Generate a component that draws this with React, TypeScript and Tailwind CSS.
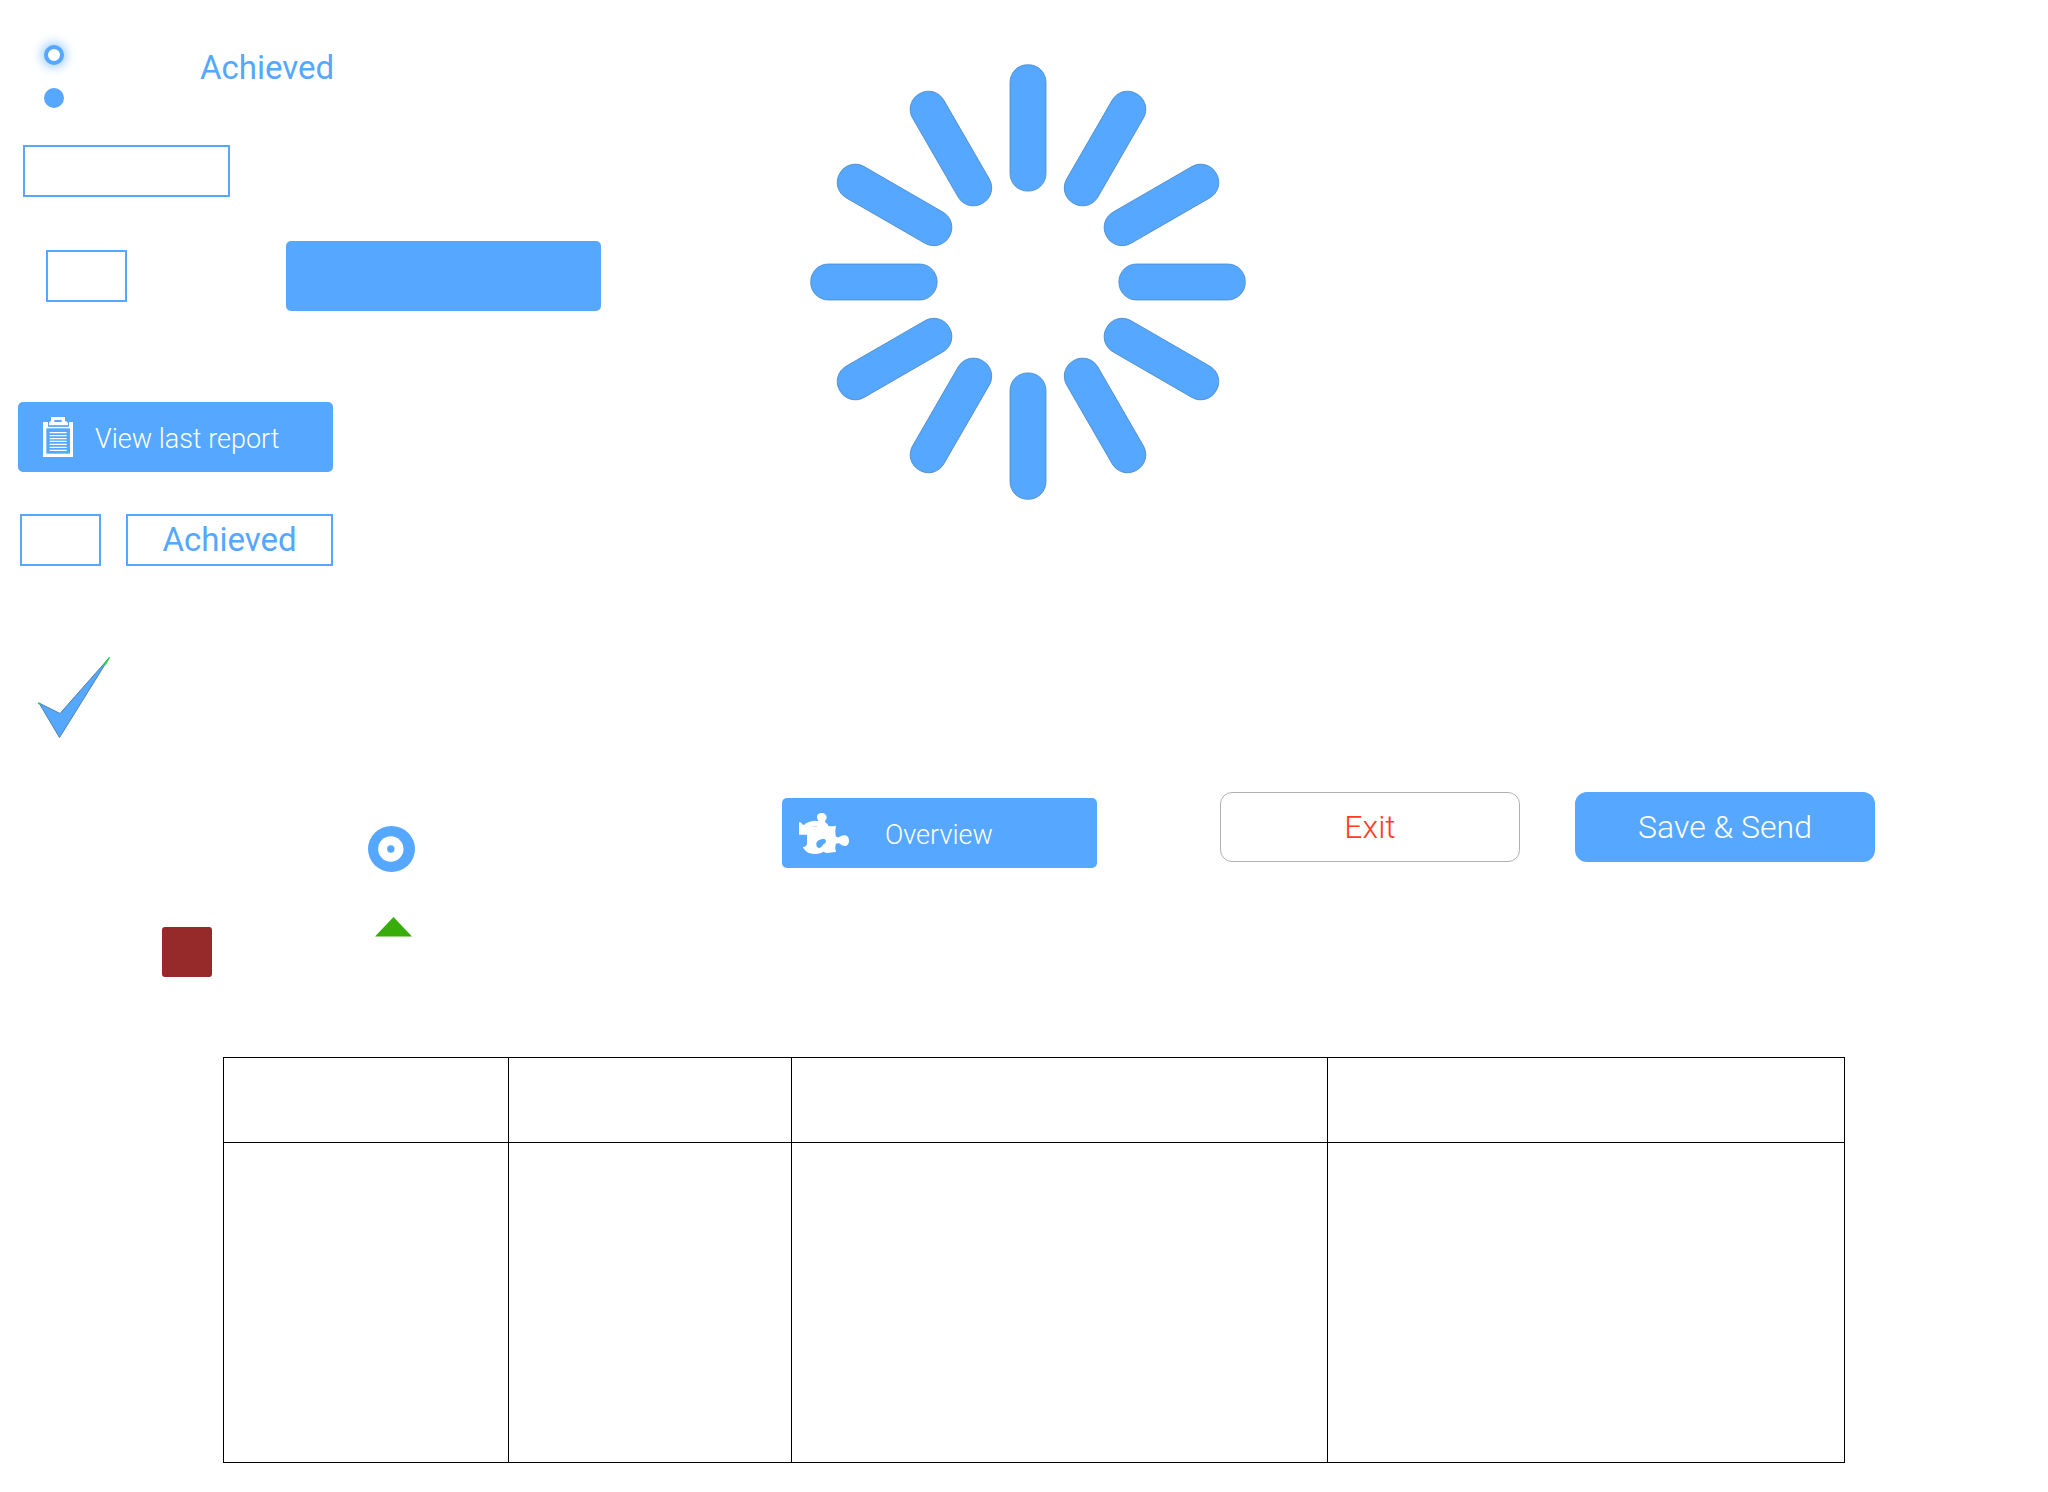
const BOX = "border-2 border-[#56a7ff] bg-transparent h-[52px] block outline-none";
const SOLID = "flex h-[70px] w-[315px] items-center rounded-[5px] bg-[#56a7ff] text-[27px] leading-8 font-light text-white";

function Spinner() {
  const angles = Array.from({ length: 12 }, (_, i) => i * 30);
  return (
    <svg viewBox="-218 -218 436 436" className="size-[436px] shrink-0" role="img" aria-label="Loading">
      {angles.map((a) => (
        <rect key={a} x="-18" y="-217.3" width="36" height="126.4" rx="17.6" transform={`rotate(${a})`} fill="#56a7ff" stroke="#4a8ac8" strokeWidth="0.8" />
      ))}
    </svg>
  );
}

function Clipboard() {
  return (
    <svg viewBox="0 0 90 120" className="h-10 w-[30px]" aria-hidden="true">
      <path d="M0 15H15V29H78V15H90V120H0Z" fill="#fff" />
      <path d="M24 0H66V13H70L75 18V25H18V18L22 13H24Z" fill="#fff" />
      <path d="M15 27H78" stroke="#56a7ff" strokeWidth="3" />
      <rect x="34" y="9" width="22" height="6" fill="#56a7ff" />
      <rect x="10" y="34" width="71" height="76" fill="#56a7ff" />
      <path d="M20 47H71M20 56H71M20 65H71M20 73H71M20 82H71M20 91H71M20 100H71" stroke="#fff" strokeWidth="4" />
    </svg>
  );
}

function Puzzle() {
  return (
    <svg viewBox="87 90 150 123" className="h-[41px] w-[50px]" aria-hidden="true">
      <path
        fill="#fff"
        fillRule="evenodd"
        d="M87 118H92L99 126Q104 126 108 121Q120 113 136 113Q144 115 145 113C142 109 141 106 141 102C141 94 147 90 155 90C163 90 170 95 170 103C170 108 166 112 165 116Q167 120 172 122L175 129Q186 131 198 128Q194 146 197 158Q199 164 206 163C212 159 217 157 224 157C232 157 237 164 237 173C237 182 232 189 224 189C218 189 212 186 208 181Q200 179 197 184Q194 195 198 207Q180 208 172 210Q166 210 161 206Q150 213 136 213Q114 213 104 200L98 193Q109 191 111 183V155H87ZM139 184C138 174 150 167 163 168C170 172 169 179 163 182C157 183 157 194 147 195C141 194 139 190 139 184Z"
      />
      <path d="M128 131Q135 129 142 131" stroke="#56a7ff" strokeWidth="1" fill="none" />
    </svg>
  );
}

export default function App() {
  return (
    <main className="min-h-screen bg-white pb-6 font-[Roboto,sans-serif]">
      <section className="flex items-start">
        <div className="w-[810px] shrink-0 pt-[45px]">
          <div className="flex items-start pl-11">
            <div className="flex flex-col gap-[23px]">
              <span className="size-5 rounded-full border-4 border-[#56a7ff] bg-white shadow-[0_0_12px_1px_#7dbcff]" />
              <span className="size-5 rounded-full bg-[#56a7ff]" />
            </div>
            <p className="ml-[136px] mt-[3px] text-[33px] leading-10 text-[#56a7ff]">Achieved</p>
          </div>
          <input aria-label="Status" className={`${BOX} mt-[37px] ml-[23px] w-[207px]`} />
          <div className="mt-11 flex items-start pl-[46px]">
            <input aria-label="Value" className={`${BOX} mt-[9px] w-[81px]`} />
            <button aria-label="Action" className={`${SOLID} ml-[159px]`} />
          </div>
          <button className={`${SOLID} mt-[91px] ml-[18px] gap-[22px] pl-[25px]`}>
            <Clipboard />
            <span className="pt-[3px]">View last report</span>
          </button>
          <div className="mt-[42px] flex gap-[25px] pl-5">
            <input aria-label="Count" className={`${BOX} w-[81px]`} />
            <button className="h-[52px] w-[207px] border-2 border-[#56a7ff] text-[33px] leading-10 text-[#56a7ff]">Achieved</button>
          </div>
          <svg viewBox="0 0 74 84" className="mt-[90px] ml-[37px] h-[84px] w-[74px]" role="img" aria-label="Done">
            <path d="M2 47L23 57.5L72 2L22.5 81.5Z" fill="#56a7ff" stroke="#4d83a8" strokeWidth="1" />
            <path d="M67 8.5L72.5 1L68.5 8.5Z" fill="#1be03a" stroke="#1bd53a" strokeWidth="1" />
            <path d="M1 47L3 48" stroke="#1be03a" strokeWidth="1.4" />
          </svg>
        </div>
        <div className="pt-[64px]">
          <Spinner />
        </div>
      </section>

      <section className="mt-[52px] flex h-[185px] items-start pl-[162px]">
        <span className="size-[50px] shrink-0 self-end rounded-[3px] bg-[#962a2a]" />
        <div className="mt-[34px] ml-[156px] flex w-[47px] shrink-0 flex-col items-center">
          <svg viewBox="0 0 47 46" className="h-[46px] w-[47px]" role="img" aria-label="Marker">
            <ellipse cx="23.5" cy="23" rx="23.5" ry="23" fill="#56a7ff" />
            <circle cx="22.8" cy="23" r="12.7" fill="#fff" />
            <circle cx="22.8" cy="23" r="3.7" fill="#56a7ff" />
          </svg>
          <svg viewBox="0 0 37 20" className="mt-[45px] ml-1 h-5 w-[37px]" role="img" aria-label="Up">
            <path d="M18.5 0L37 19.5H0Z" fill="#37ac0b" />
          </svg>
        </div>
        <button className={`${SOLID} mt-[6px] ml-[367px] shrink-0 gap-9 pl-[17px]`}>
          <Puzzle />
          <span className="pt-[3px]">Overview</span>
        </button>
        <button className="ml-[123px] h-[70px] w-[300px] shrink-0 rounded-xl border border-[#b0b0b0] text-[32px] leading-10 font-light text-[#ff3b22]">Exit</button>
        <button className="ml-[55px] h-[70px] w-[300px] shrink-0 rounded-xl bg-[#56a7ff] text-[32px] leading-10 font-light text-white">Save &amp; Send</button>
      </section>

      <section className="mt-20 pr-[203px] pl-[223px]">
        <table aria-label="Results" className="w-full table-fixed border-collapse border border-black">
          <colgroup>
            <col className="w-[285px]" />
            <col className="w-[283px]" />
            <col className="w-[536px]" />
            <col />
          </colgroup>
          <thead>
            <tr className="h-[85px]">
              {[0, 1, 2, 3].map((c) => <th key={c} scope="col" className="border border-black" />)}
            </tr>
          </thead>
          <tbody>
            <tr className="h-80">
              {[0, 1, 2, 3].map((c) => <td key={c} className="border border-black" />)}
            </tr>
          </tbody>
        </table>
      </section>
    </main>
  );
}
